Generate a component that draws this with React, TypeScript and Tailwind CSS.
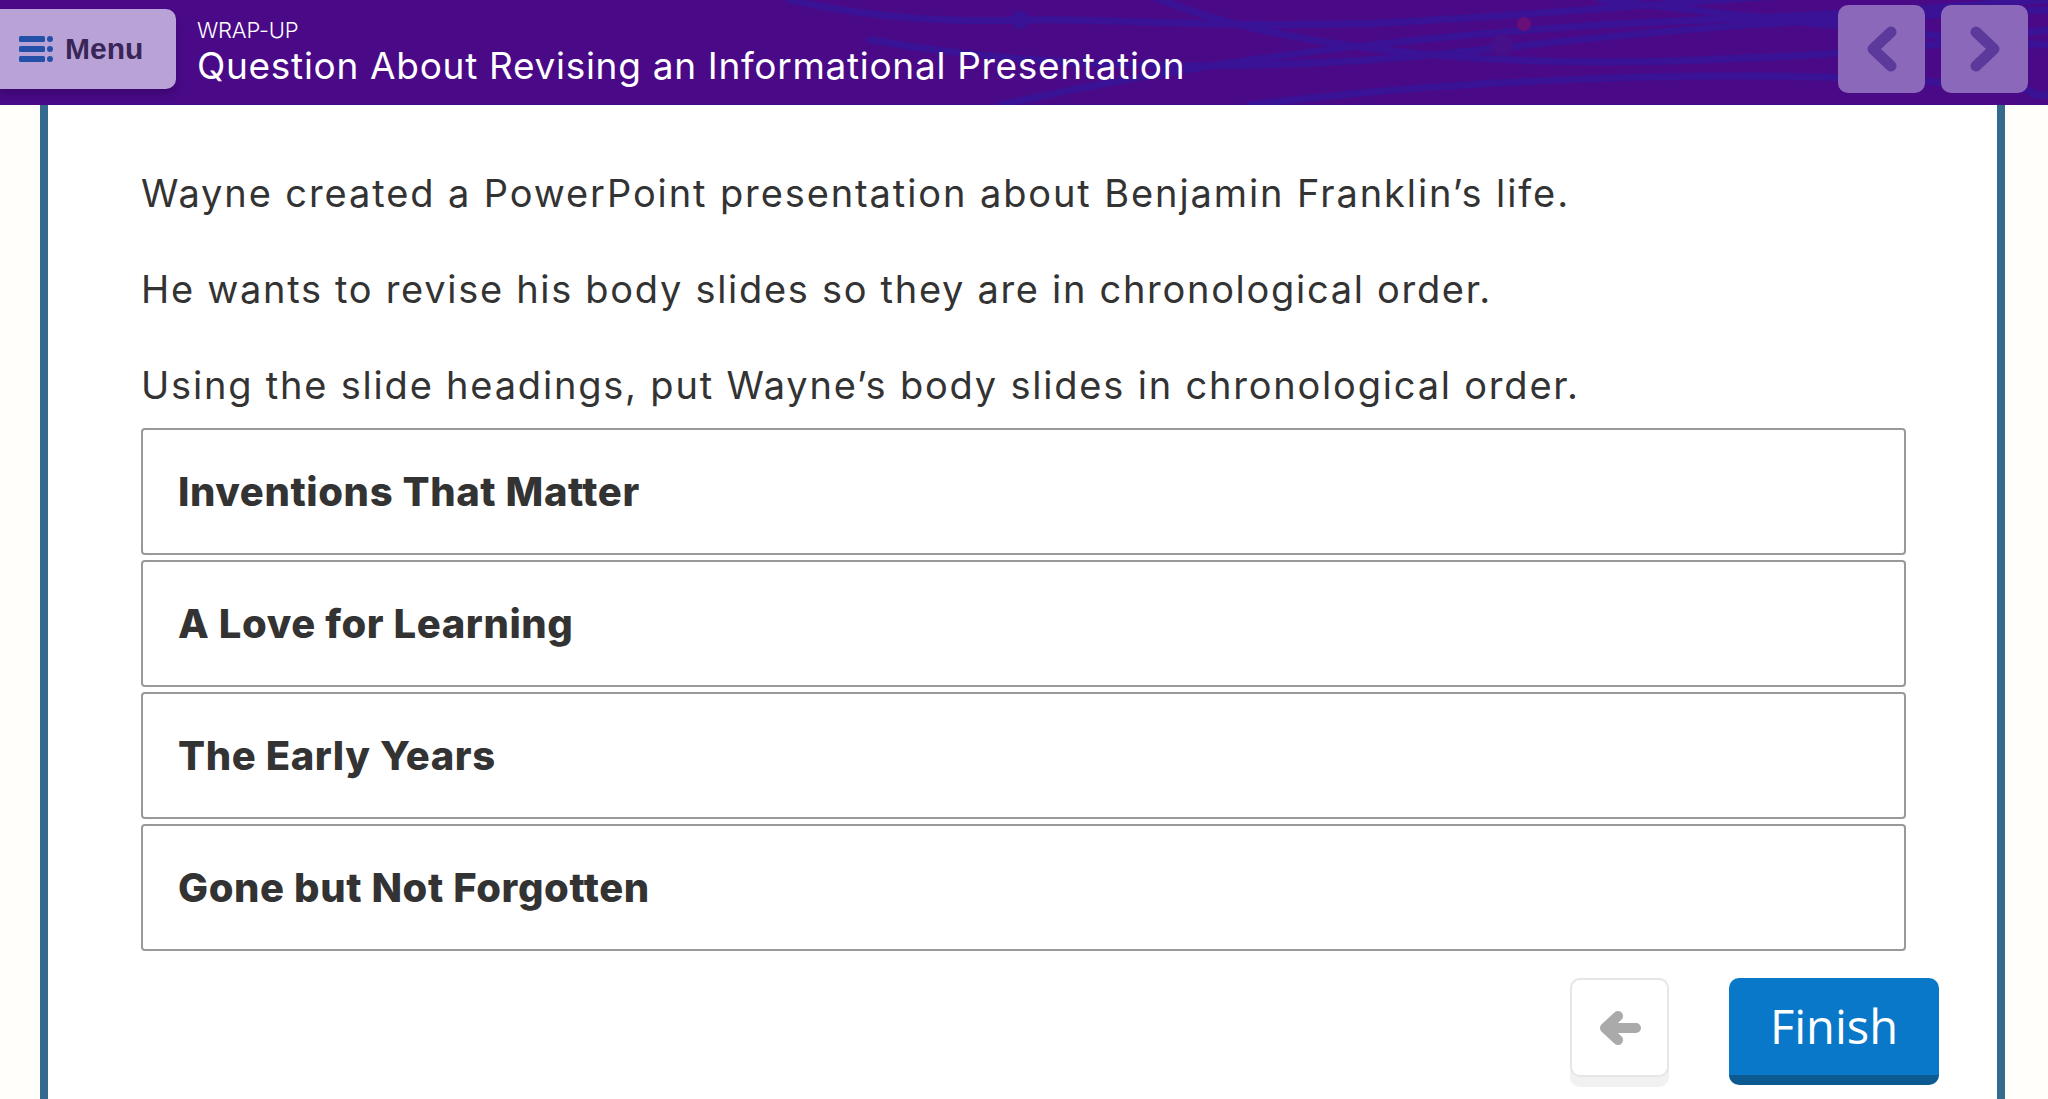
import React from "react";

const items = [
  "Inventions That Matter",
  "A Love for Learning",
  "The Early Years",
  "Gone but Not Forgotten",
];

function HeaderDecor() {
  return (
    <svg
      className="absolute inset-0 w-full h-full pointer-events-none"
      viewBox="0 0 2048 105"
      preserveAspectRatio="none"
    >
      <g fill="none" stroke="#3a1296" strokeWidth="7" strokeLinecap="round">
        <path d="M 790 0 C 880 20 960 22 1030 20 S 1250 30 1400 22 S 1700 0 1800 -5" />
        <path d="M 870 40 C 1050 70 1250 75 1480 50 S 1800 20 2048 10" />
        <path d="M 1150 -5 C 1250 40 1450 70 1700 60 S 1950 40 2048 30" />
        <path d="M 1000 105 C 1200 60 1450 30 1700 20 S 1950 5 2048 0" />
        <path d="M 1250 105 C 1450 80 1700 70 1900 80 S 2000 95 2048 95" />
        <path d="M 1600 0 C 1700 10 1850 30 2048 45" />
      </g>
      <circle cx="1020" cy="20" r="9" fill="#3a1296" />
      <circle cx="1502" cy="45" r="11" fill="#45108a" />
      <circle cx="1524" cy="24" r="7" fill="#6a0f78" />
      <circle cx="1916" cy="22" r="9" fill="#8a4a8a" opacity="0.7" />
    </svg>
  );
}

function MenuIcon() {
  return (
    <svg width="34" height="26" viewBox="0 0 34 26">
      <rect x="0" y="0" width="26" height="6" rx="1.5" fill="#2350a8" />
      <rect x="0" y="10" width="26" height="6" rx="1.5" fill="#2350a8" />
      <rect x="0" y="20" width="26" height="6" rx="1.5" fill="#2350a8" />
      <circle cx="31" cy="3" r="3" fill="#2350a8" />
      <circle cx="31" cy="13" r="3" fill="#2350a8" />
      <circle cx="31" cy="23" r="3" fill="#2350a8" />
    </svg>
  );
}

function Chevron({ dir }: { dir: "left" | "right" }) {
  return (
    <svg width="34" height="46" viewBox="0 0 34 46">
      <path
        d={dir === "left" ? "M 26 6 L 8 23 L 26 40" : "M 8 6 L 26 23 L 8 40"}
        fill="none"
        stroke="#5b3a9c"
        strokeWidth="11"
        strokeLinecap="round"
        strokeLinejoin="round"
      />
    </svg>
  );
}

export default function App() {
  return (
    <div
      className="w-[2048px] h-[1099px] overflow-hidden bg-[#fffefa] flex flex-col"
      style={{ fontFamily: "Inter, 'Noto Sans', sans-serif" }}
    >
      <header className="relative h-[105px] shrink-0 bg-[#4a0a87] flex items-center">
        <HeaderDecor />
        <button className="relative h-[80px] w-[176px] rounded-r-[10px] bg-[#b9a3d6] shadow-[0_6px_6px_rgba(40,0,80,0.35)] flex items-center pl-[19px] gap-[12px] self-start mt-[9px]">
          <MenuIcon />
          <span
            className="text-[30px] font-bold text-[#3a2558] leading-none"
            style={{ fontFamily: "'Liberation Sans', Arial, sans-serif" }}
          >
            Menu
          </span>
        </button>
        <div className="relative ml-[21px] flex flex-col text-white self-start mt-[17px]">
          <span className="text-[22px] font-light leading-[26px] tracking-[-0.2px]">WRAP-UP</span>
          <span className="text-[37px] font-normal leading-[46px] tracking-[0.7px]">
            Question About Revising an Informational Presentation
          </span>
        </div>
        <div className="relative ml-auto mr-[20px] flex gap-[16px] self-start mt-[5px]">
          <div className="w-[87px] h-[88px] rounded-[10px] bg-[#8c68bb] flex items-center justify-center">
            <Chevron dir="left" />
          </div>
          <div className="w-[87px] h-[88px] rounded-[10px] bg-[#8c68bb] flex items-center justify-center">
            <Chevron dir="right" />
          </div>
        </div>
      </header>

      <div className="flex-1 flex pl-[40px] pr-[43px] min-h-0">
        <main className="flex-1 bg-white border-l-[8px] border-r-[8px] border-[#336a8e] pl-[93px] pr-[91px] pt-[64px] flex flex-col text-[#333333]">
          <p className="text-[38px] leading-[48px] tracking-[1.9px]">
            Wayne created a PowerPoint presentation about Benjamin Franklin’s life.
          </p>
          <p className="text-[38px] leading-[48px] tracking-[1.7px] mt-[48px]">
            He wants to revise his body slides so they are in chronological order.
          </p>
          <p className="text-[38px] leading-[48px] tracking-[1.8px] mt-[48px]">
            Using the slide headings, put Wayne’s body slides in chronological order.
          </p>
          <div className="mt-[19px] flex flex-col gap-[5px]">
            {items.map((t) => (
              <div
                key={t}
                className="h-[127px] border-2 border-[#999999] rounded-[4px] bg-white flex items-center pl-[35px]"
              >
                <span className="text-[40px] font-extrabold text-[#333333] tracking-[0.6px]">{t}</span>
              </div>
            ))}
          </div>
          <div className="mt-[27px] flex justify-end gap-[60px] mr-[-33px]">
            <button className="w-[99px] h-[109px] rounded-[10px] bg-[#f1f1f1] flex flex-col">
              <div className="h-[99px] rounded-[10px] bg-white border-2 border-[#e6e6e6] flex items-center justify-center">
                <svg width="42" height="34" viewBox="0 0 42 34">
                  <path
                    d="M 19 5 L 6 17 L 19 29 M 6 17 L 37 17"
                    fill="none"
                    stroke="#aaaaaa"
                    strokeWidth="10"
                    strokeLinecap="round"
                    strokeLinejoin="round"
                  />
                </svg>
              </div>
            </button>
            <button
              className="w-[210px] h-[107px] rounded-[10px] bg-[#0a78c8] border-b-[10px] border-[#0d5a92] text-white text-[47px] leading-none flex items-center justify-center"
              style={{ fontFamily: "'Open Sans', sans-serif" }}
            >
              Finish
            </button>
          </div>
        </main>
      </div>
    </div>
  );
}
